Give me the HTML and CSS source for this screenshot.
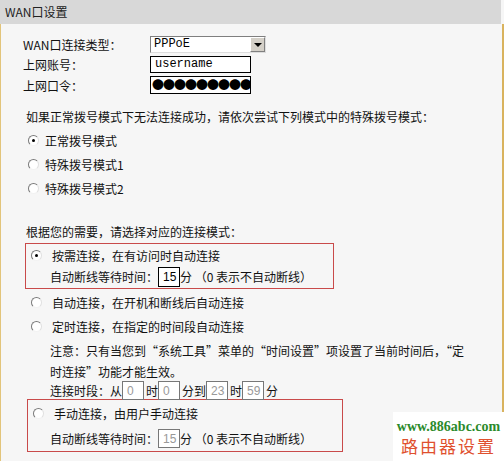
FILE: index.html
```html
<!DOCTYPE html>
<html lang="zh-CN">
<head>
    <meta charset="UTF-8">
    <title>WAN口设置</title>
    <link rel="stylesheet" href="styles.css">
</head>
<body>
    <div class="page">
        <div class="title-bar">WAN口设置</div>
        <div class="panel">
            <div class="form-grid">
                <label>WAN口连接类型：</label>
                <div class="select">
                    <span class="select-value">PPPoE</span>
                    <span class="select-arrow"></span>
                </div>
                <label>上网账号：</label>
                <div class="text-box mono">username</div>
                <label>上网口令：</label>
                <div class="text-box dots">●●●●●●●●●</div>
            </div>

            <p class="hint">如果正常拨号模式下无法连接成功，请依次尝试下列模式中的特殊拨号模式：</p>
            <div class="radio-list">
                <div class="radio-row"><span class="radio checked"></span>正常拨号模式</div>
                <div class="radio-row"><span class="radio"></span>特殊拨号模式1</div>
                <div class="radio-row"><span class="radio"></span>特殊拨号模式2</div>
            </div>

            <p class="hint second">根据您的需要，请选择对应的连接模式：</p>

            <div class="mode-box first">
                <div class="mode-row"><span class="radio checked"></span>按需连接，在有访问时自动连接</div>
                <div class="sub-row">自动断线等待时间：<span class="num-box">15</span>分 （0 表示不自动断线）</div>
            </div>

            <div class="mode-row outside"><span class="radio"></span>自动连接，在开机和断线后自动连接</div>
            <div class="mode-row outside"><span class="radio"></span>定时连接，在指定的时间段自动连接</div>
            <p class="note">注意：只有当您到“系统工具”菜单的“时间设置”项设置了当前时间后，“定时连接”功能才能生效。</p>
            <div class="period-row">连接时段：从<span class="num-box off">0</span> 时<span class="num-box off">0</span> 分到<span class="num-box off">23</span>时<span class="num-box off">59</span>分</div>

            <div class="mode-box last">
                <div class="mode-row"><span class="radio"></span>手动连接，由用户手动连接</div>
                <div class="sub-row">自动断线等待时间：<span class="num-box off">15</span>分 （0 表示不自动断线）</div>
            </div>
        </div>

        <div class="watermark">
            <div class="wm-url">www.886abc.com</div>
            <div class="wm-name">路由器设置</div>
        </div>
    </div>
</body>
</html>
```

FILE: styles.css
```css
* {
    box-sizing: border-box;
}
body {
    margin: 0;
    font-family: "Noto Sans CJK SC", "Liberation Sans", sans-serif;
    font-size: 12px;
    color: #111;
    background-color: #f6f6f6;
}
.page {
    position: relative;
    width: 504px;
    height: 461px;
    overflow: hidden;
    background-color: #f6f6f6;
}
.title-bar {
    height: 24px;
    line-height: 24px;
    width: 501px;
    padding-left: 5px;
    background-color: #d8d8d8;
    color: #222;
    font-size: 12px;
}
.panel {
    height: 437px;
    width: 504px;
    padding: 12px 0 0 22px;
    border-left: 1px solid #e2c47a;
    border-right: 2px solid #d9b35e;
}
.form-grid {
    display: grid;
    grid-template-columns: 127px 116px;
    row-gap: 3px;
    align-items: center;
}
.form-grid label {
    line-height: 17px;
}
.select {
    display: flex;
    height: 17px;
    width: 116px;
    background-color: #fff;
    border: 1px solid #7f7f7f;
    border-right-color: #ddd;
    border-bottom-color: #ddd;
}
.select-value {
    flex: 1;
    padding-left: 3px;
    font-family: "Liberation Mono", monospace;
    font-size: 12px;
    line-height: 15px;
    color: #000;
}
.select-arrow {
    width: 15px;
    background-color: #d4d0c8;
    border: 1px solid #fff;
    border-right-color: #808080;
    border-bottom-color: #808080;
    position: relative;
}
.select-arrow::after {
    content: "";
    position: absolute;
    left: 3px;
    top: 5px;
    border-left: 4px solid transparent;
    border-right: 4px solid transparent;
    border-top: 4px solid #000;
}
.text-box {
    width: 101px;
    height: 17px;
    background-color: #fff;
    border: 1px solid #000;
    padding-left: 4px;
    line-height: 15px;
    color: #000;
}
.mono {
    font-family: "Liberation Mono", monospace;
    font-size: 12px;
}
.dots {
    height: 18px;
    font-size: 12px;
    letter-spacing: -1px;
    padding-left: 1px;
    line-height: 16px;
    overflow: hidden;
    white-space: nowrap;
}
.hint {
    margin: 15px 0 0 3px;
    line-height: 16px;
}
.hint.second {
    margin-top: 24px;
}
.radio-list {
    margin-top: 3px;
}
.radio-row {
    display: flex;
    align-items: center;
    height: 24px;
    padding-left: 5px;
}
.radio {
    display: inline-block;
    position: relative;
    width: 11px;
    height: 11px;
    border-radius: 50%;
    border: 1px solid;
    border-color: #7a7a7a #e0e0e0 #f2f2f2 #7a7a7a;
    background-color: #fff;
    margin-right: 6px;
    flex: none;
}
.radio.checked::after {
    content: "";
    position: absolute;
    left: 3px;
    top: 3px;
    width: 3px;
    height: 3px;
    border-radius: 50%;
    background-color: #000;
}
.mode-box {
    border: 1px solid #c94a4a;
    padding: 1px 0 0 5px;
}
.mode-box.first {
    margin: 3px 0 0 2px;
    width: 309px;
    padding-bottom: 1px;
}
.mode-box.first .mode-row,
.mode-box.first .sub-row {
    height: 21px;
}
.mode-box.last {
    margin: 0 0 0 4px;
    width: 316px;
}
.mode-row {
    display: flex;
    align-items: center;
    height: 24px;
}
.mode-row .radio {
    margin-right: 10px;
}
.mode-row.outside {
    height: 24px;
    padding-left: 8px;
}
.mode-box.first + .mode-row.outside {
    margin-top: 1px;
}
.sub-row {
    display: flex;
    align-items: center;
    height: 26px;
    padding-left: 19px;
}
.mode-box.last .sub-row {
    padding-left: 17px;
}
.num-box {
    display: inline-block;
    width: 22px;
    height: 20px;
    line-height: 18px;
    border: 1px solid #000;
    background-color: #fff;
    padding-left: 4px;
    color: #000;
    font-family: "Liberation Sans", sans-serif;
}
.num-box.off {
    border-color: #777;
    color: #999;
    height: 19px;
}
.note {
    margin: 2px 0 0 27px;
    width: 424px;
    line-height: 21px;
}
.period-row {
    display: flex;
    align-items: center;
    padding-left: 27px;
    height: 17px;
}
.period-row .num-box {
    width: 22px;
    margin-right: 2px;
}
.watermark {
    position: absolute;
    left: 393px;
    top: 412px;
    width: 111px;
    height: 49px;
    background-color: #fff;
    text-align: center;
}
.wm-url {
    font-family: "Liberation Serif", serif;
    font-weight: bold;
    font-size: 14px;
    color: #2b8a2b;
    margin-top: 7px;
    line-height: 16px;
}
.wm-name {
    font-size: 17px;
    letter-spacing: 2px;
    color: #e0502e;
    line-height: 22px;
}
```
